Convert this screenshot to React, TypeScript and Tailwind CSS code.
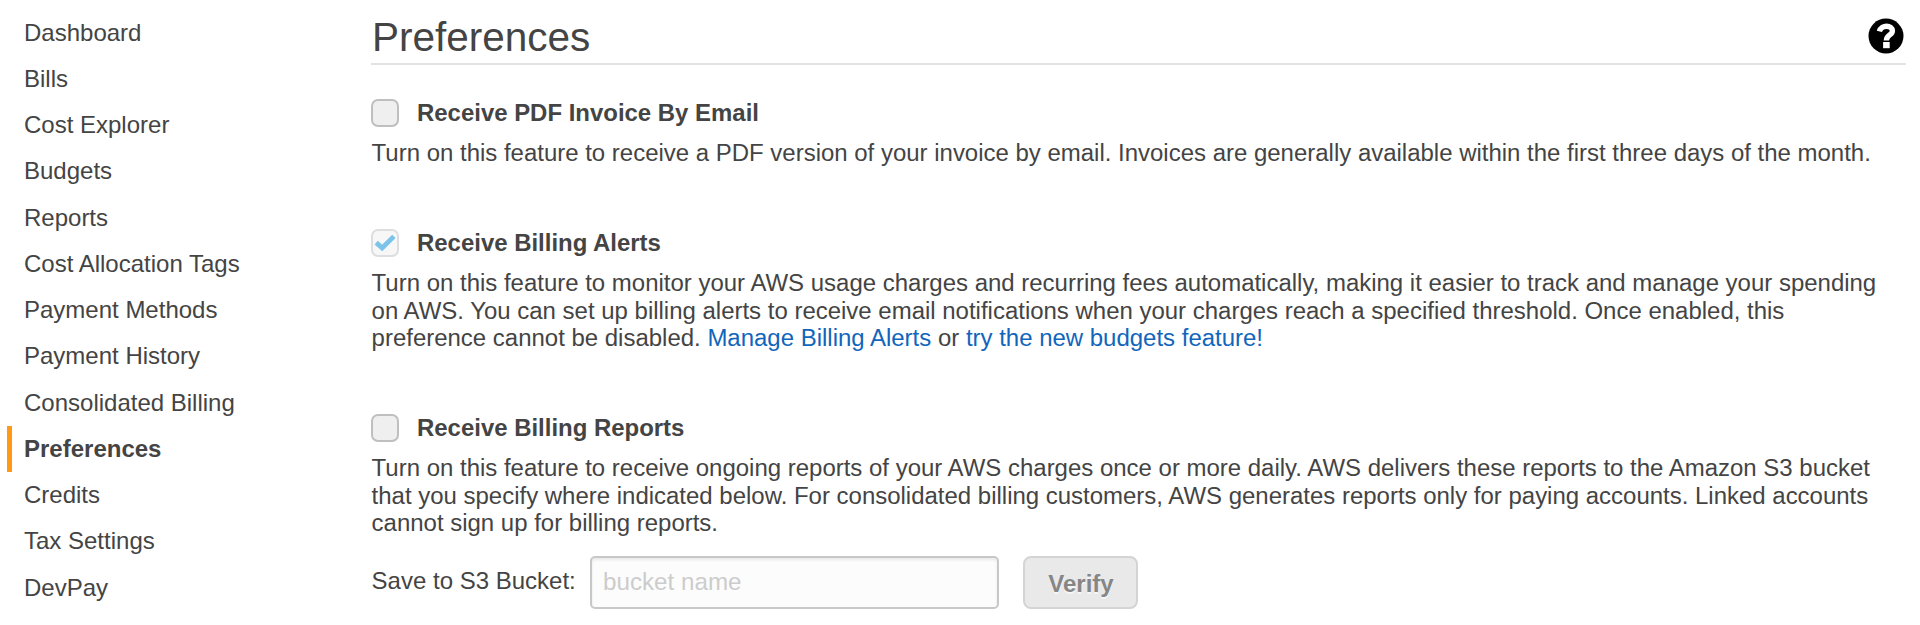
import type { ReactNode } from "react";

const NAV_ITEMS = [
  "Dashboard",
  "Bills",
  "Cost Explorer",
  "Budgets",
  "Reports",
  "Cost Allocation Tags",
  "Payment Methods",
  "Payment History",
  "Consolidated Billing",
  "Preferences",
  "Credits",
  "Tax Settings",
  "DevPay",
];

function Checkbox({ checked = false }: { checked?: boolean }) {
  return (
    <span
      role="checkbox"
      aria-checked={checked}
      className={
        checked
          ? "flex size-7 items-center justify-center rounded-[7px] border-[2px] border-[#dedede] bg-[#f7f7f7]"
          : "flex size-7 items-center justify-center rounded-[7px] border-[2px] border-[#bfbfbf] bg-[#efefef]"
      }
    >
      {checked && (
        <svg viewBox="0 0 24 24" className="size-6 shrink-0" fill="none">
          <path d="M3.2 11.6 L9.2 17 L20.9 5.4" stroke="#7cc3ea" strokeWidth="4.8" />
        </svg>
      )}
    </span>
  );
}

function Preference({ title, checked, children }: { title: string; checked?: boolean; children: ReactNode }) {
  return (
    <section>
      <div className="flex h-7 items-center gap-[18px]">
        <Checkbox checked={checked} />
        <h2 className="text-[23.95px] leading-7 font-bold whitespace-nowrap">{title}</h2>
      </div>
      <p className="mt-3 pl-[0.6px] text-[23.98px] leading-[27.5px] whitespace-nowrap">{children}</p>
    </section>
  );
}

export default function App() {
  return (
    <div className="flex h-[625px] w-[1920px] overflow-hidden bg-white font-['Liberation_Sans',Arial,sans-serif] text-[24px] text-[#444444]">
      <nav className="w-[371px] shrink-0 pt-[9.6px] pl-[7px]">
        <ul>
          {NAV_ITEMS.map((item) => (
            <li
              key={item}
              className={
                item === "Preferences"
                  ? "flex h-[46.25px] items-center border-l-[5px] border-[#ff9916] pl-3 font-bold"
                  : "flex h-[46.25px] items-center border-l-[5px] border-transparent pl-3"
              }
            >
              <a className="leading-7">{item}</a>
            </li>
          ))}
        </ul>
      </nav>

      <main className="w-[1535px]">
        <header className="flex h-[65px] items-start justify-between border-b-2 border-[#e3e3e3] pt-[17px] pr-[2.5px]">
          <h1 className="pl-px text-[40.5px] leading-10">Preferences</h1>
          <svg viewBox="0 0 36 36" className="mt-px size-9" fill="none">
            <circle cx="18" cy="18" r="17.5" fill="#000" />
            <path
              d="M11.4 13.4 C13.2 6.4 24.4 6.8 24.4 13 C24.4 17.2 18.4 16.8 18.4 22.4"
              stroke="#fff"
              strokeWidth="5.4"
            />
            <rect x="15.1" y="24" width="6.6" height="6.2" fill="#fff" />
          </svg>
        </header>

        <div className="flex flex-col gap-[62.5px] pt-[34px]">
          <Preference title="Receive PDF Invoice By Email">
            Turn on this feature to receive a PDF version of your invoice by email. Invoices are generally available
            within the first three days of the month.
          </Preference>

          <Preference title="Receive Billing Alerts" checked>
            Turn on this feature to monitor your AWS usage charges and recurring fees automatically, making it easier to
            track and manage your spending
            <br />
            on AWS. You can set up billing alerts to receive email notifications when your charges reach a specified
            threshold. Once enabled, this
            <br />
            preference cannot be disabled. <a className="text-[#1166bb]">Manage Billing Alerts</a> or{" "}
            <a className="text-[#1166bb]">try the new budgets feature!</a>
          </Preference>

          <Preference title="Receive Billing Reports">
            Turn on this feature to receive ongoing reports of your AWS charges once or more daily. AWS delivers these
            reports to the Amazon S3 bucket
            <br />
            that you specify where indicated below. For consolidated billing customers, AWS generates reports only for
            paying accounts. Linked accounts
            <br />
            cannot sign up for billing reports.
          </Preference>
        </div>

        <form className="mt-[19px] flex h-[54px] items-start">
          <label className="w-[219px] pt-[11px] pl-[0.6px] leading-7 whitespace-nowrap">Save to S3 Bucket:</label>
          <input
            placeholder="bucket name"
            className="h-[53.5px] w-[409px] rounded-[5px] border-2 border-[#c8c8c8] bg-[#fcfcfc] pr-[11px] pb-[1px] pl-[11px] text-[24.2px] shadow-[inset_0_2px_3px_rgba(0,0,0,0.08)] placeholder:text-[#cccccc]"
          />
          <button
            type="button"
            className="ml-6 h-[53.5px] w-[115px] rounded-[8px] border-2 border-[#d4d4d4] bg-[#e9e9e9] pt-[4px] pl-px font-bold text-[#868686] [text-shadow:0_2px_0_#f6f6f6]"
          >
            Verify
          </button>
        </form>
      </main>
    </div>
  );
}
